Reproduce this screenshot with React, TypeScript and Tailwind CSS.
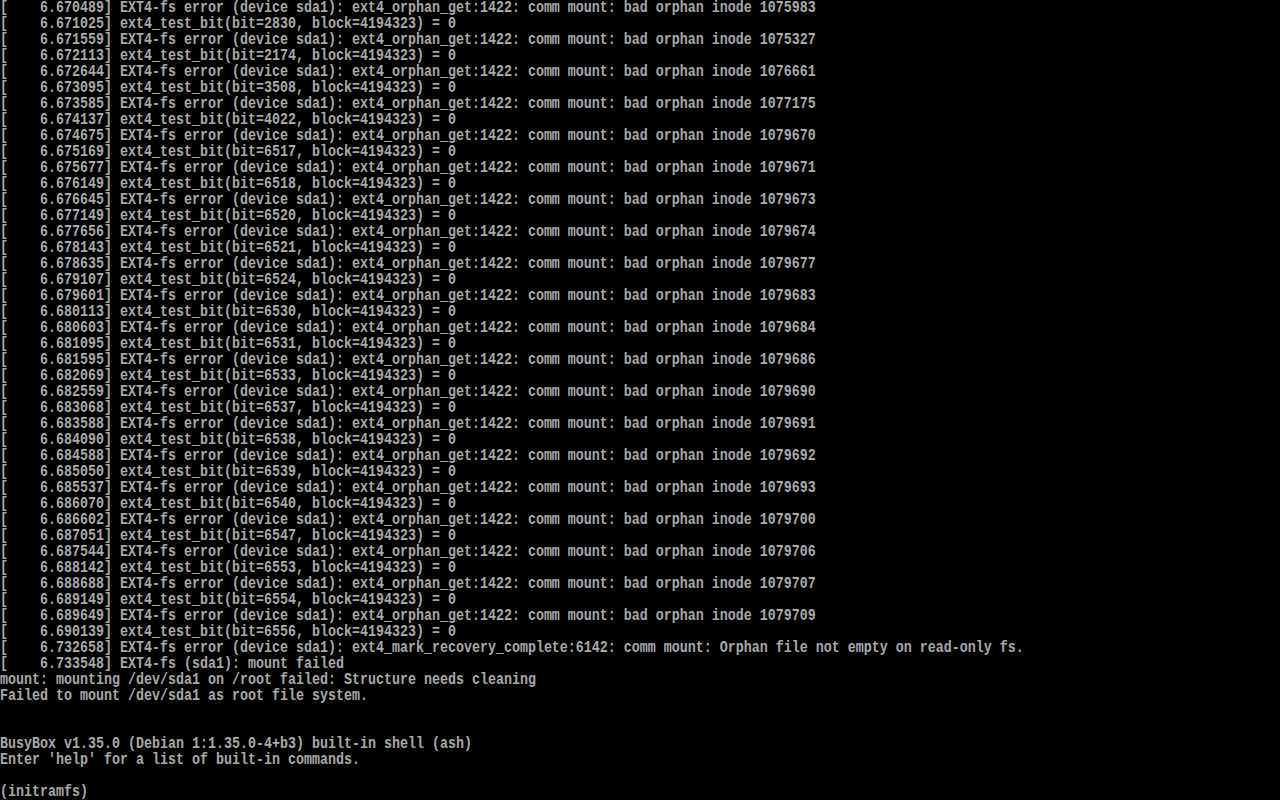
import React from "react";

const orphan: [string, string, string, string][] = [
  ["6.670489", "1075983", "6.671025", "2830"],
  ["6.671559", "1075327", "6.672113", "2174"],
  ["6.672644", "1076661", "6.673095", "3508"],
  ["6.673585", "1077175", "6.674137", "4022"],
  ["6.674675", "1079670", "6.675169", "6517"],
  ["6.675677", "1079671", "6.676149", "6518"],
  ["6.676645", "1079673", "6.677149", "6520"],
  ["6.677656", "1079674", "6.678143", "6521"],
  ["6.678635", "1079677", "6.679107", "6524"],
  ["6.679601", "1079683", "6.680113", "6530"],
  ["6.680603", "1079684", "6.681095", "6531"],
  ["6.681595", "1079686", "6.682069", "6533"],
  ["6.682559", "1079690", "6.683068", "6537"],
  ["6.683588", "1079691", "6.684090", "6538"],
  ["6.684588", "1079692", "6.685050", "6539"],
  ["6.685537", "1079693", "6.686070", "6540"],
  ["6.686602", "1079700", "6.687051", "6547"],
  ["6.687544", "1079706", "6.688142", "6553"],
  ["6.688688", "1079707", "6.689149", "6554"],
  ["6.689649", "1079709", "6.690139", "6556"],
];

const lines: string[] = [];
for (const [t1, inode, t2, bit] of orphan) {
  lines.push(
    `[    ${t1}] EXT4-fs error (device sda1): ext4_orphan_get:1422: comm mount: bad orphan inode ${inode}`
  );
  lines.push(`[    ${t2}] ext4_test_bit(bit=${bit}, block=4194323) = 0`);
}
lines.push(
  "[    6.732658] EXT4-fs error (device sda1): ext4_mark_recovery_complete:6142: comm mount: Orphan file not empty on read-only fs."
);
lines.push("[    6.733548] EXT4-fs (sda1): mount failed");
lines.push("mount: mounting /dev/sda1 on /root failed: Structure needs cleaning");
lines.push("Failed to mount /dev/sda1 as root file system.");
lines.push("");
lines.push("");
lines.push("BusyBox v1.35.0 (Debian 1:1.35.0-4+b3) built-in shell (ash)");
lines.push("Enter 'help' for a list of built-in commands.");
lines.push("");
lines.push("(initramfs) ");

export default function App() {
  return (
    <div className="w-[1280px] h-[800px] bg-black overflow-hidden text-[#aaaaaa] font-['Liberation_Mono',monospace] text-[13.3333px] leading-[16px] font-bold">
      {lines.map((l, i) => (
        <div key={i} className="h-[16px] whitespace-pre scale-y-[1.22] origin-[0_70%] translate-y-[1px]">
          {l}
        </div>
      ))}
    </div>
  );
}
